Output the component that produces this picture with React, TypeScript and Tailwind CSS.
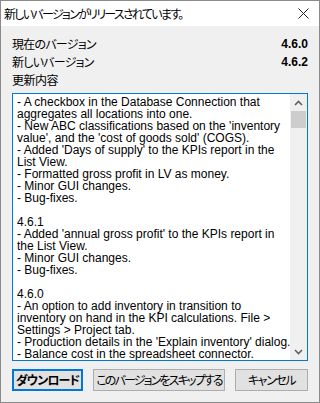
const notes = [
  "- A checkbox in the Database Connection that",
  "aggregates all locations into one.",
  "- New ABC classifications based on the 'inventory",
  "value', and the 'cost of goods sold' (COGS).",
  "- Added 'Days of supply' to the KPIs report in the",
  "List View.",
  "- Formatted gross profit in LV as money.",
  "- Minor GUI changes.",
  "- Bug-fixes.",
  "",
  "4.6.1",
  "- Added 'annual gross profit' to the KPIs report in",
  "the List View.",
  "- Minor GUI changes.",
  "- Bug-fixes.",
  "",
  "4.6.0",
  "- An option to add inventory in transition to",
  "inventory on hand in the KPI calculations. File >",
  "Settings > Project tab.",
  "- Production details in the 'Explain inventory' dialog.",
  "- Balance cost in the spreadsheet connector.",
];

const jp = "font-['Noto_Sans_CJK_JP',sans-serif] [font-feature-settings:'palt']";

function Chevron({ down }: { down?: boolean }) {
  return (
    <svg width="9" height="6" viewBox="0 0 9 6" className={down ? "rotate-180" : ""}>
      <path d="M1 5 L4.5 1.5 L8 5" fill="none" stroke="#606060" strokeWidth="1.6" />
    </svg>
  );
}

export default function App() {
  return (
    <div className="w-[320px] h-[403px] flex flex-col border border-[#8a8a8a] bg-[#f0f0f0] text-black overflow-hidden">
      <div className="h-[25px] shrink-0 bg-white flex items-center justify-between pl-[3px] pr-[10px]">
        <span className={`${jp} text-[12px] leading-none tracking-[-1.7px] whitespace-nowrap`}>
          新しいバージョンがリリースされています。
        </span>
        <svg width="11" height="11" viewBox="0 0 11 11">
          <path d="M0.5 0.5 L10.5 10.5 M10.5 0.5 L0.5 10.5" stroke="#222" strokeWidth="1" />
        </svg>
      </div>

      <div className="flex-1 flex flex-col px-[11px] pt-[9px]">
        <div className={`${jp} text-[12px] leading-[18px] flex flex-col`}>
          <div className="flex justify-between">
            <span className="tracking-[-0.75px]">現在のバージョン</span>
            <span className="font-bold font-['Liberation_Sans',sans-serif] text-[12px]">4.6.0</span>
          </div>
          <div className="flex justify-between">
            <span className="tracking-[-0.75px]">新しいバージョン</span>
            <span className="font-bold font-['Liberation_Sans',sans-serif] text-[12px]">4.6.2</span>
          </div>
          <div className="tracking-[-0.5px]">更新内容</div>
        </div>

        <div className="mt-[4px] h-[268px] border border-[#0078d7] bg-white flex">
          <div className="flex-1 overflow-hidden pl-[4px] pt-[2px] font-['Liberation_Sans',sans-serif] text-[12px] leading-[12px] whitespace-pre">
            {notes.map((l, i) => (
              <div key={i} className="h-[12px]">{l}</div>
            ))}
          </div>
          <div className="w-[17px] bg-[#f0f0f0] flex flex-col items-center">
            <div className="h-[17px] flex items-center justify-center">
              <Chevron />
            </div>
            <div className="w-[15px] h-[17px] bg-[#cdcdcd]" />
            <div className="flex-1" />
            <div className="h-[17px] flex items-center justify-center">
              <Chevron down />
            </div>
          </div>
        </div>

        <div className={`${jp} mt-[8px] flex justify-between text-[12px] whitespace-nowrap`}>
          <button className="w-[71px] h-[22px] border-2 border-[#0078d7] bg-[#e1e1e1] font-bold leading-none tracking-[-0.85px]">
            ダウンロード
          </button>
          <button className="w-[132px] h-[22px] border border-[#adadad] bg-[#e1e1e1] leading-none tracking-[-1.85px]">
            このバージョンをスキップする
          </button>
          <button className="w-[73px] h-[22px] border border-[#adadad] bg-[#e1e1e1] leading-none tracking-[-1.4px]">
            キャンセル
          </button>
        </div>
      </div>
    </div>
  );
}
